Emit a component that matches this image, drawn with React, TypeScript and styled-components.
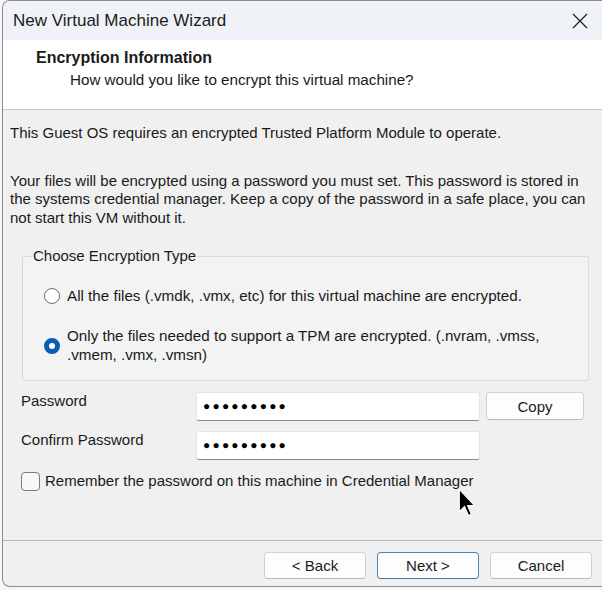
import React, { useState } from "react";
import styled, { createGlobalStyle } from "styled-components";

const GlobalStyle = createGlobalStyle`
  html, body {
    margin: 0;
    padding: 0;
    background: #f6f6f6;
  }
  body {
    font-family: "Liberation Sans", Arial, sans-serif;
    color: #1a1a1a;
  }
`;

const Window = styled.div`
  position: relative;
  margin-left: 2px;
  width: 606px;
  height: 587px;
  display: flex;
  flex-direction: column;
  border: 1px solid #8c8c8c;
  border-right: none;
  border-radius: 8px 0 0 8px;
  overflow: hidden;
  background: #f0f0f0;
  box-sizing: border-box;
`;

const TitleBar = styled.div`
  height: 39px;
  flex: none;
  display: flex;
  align-items: center;
  justify-content: space-between;
  padding-left: 10px;
  background: #eff2f6;
  font-size: 17px;
  color: #1b1b1b;
`;

const CloseButton = styled.button`
  width: 46px;
  height: 39px;
  margin-right: 5px;
  border: none;
  background: transparent;
  display: flex;
  align-items: center;
  justify-content: center;
  padding: 0;
`;

const Header = styled.div`
  flex: none;
  height: 70px;
  box-sizing: border-box;
  background: #ffffff;
  border-bottom: 1px solid #c9c9c9;
  padding: 9px 0 0 33px;
`;

const HeaderTitle = styled.div`
  font-weight: bold;
  font-size: 16px;
  line-height: 18px;
`;

const HeaderSub = styled.div`
  font-size: 15.2px;
  line-height: 18px;
  margin-top: 4px;
  padding-left: 34px;
`;

const Body = styled.div`
  flex: 1;
  padding: 14px 0 0 7px;
  font-size: 15px;
  line-height: 18.5px;
`;

const Para = styled.p<{ $gap?: number }>`
  margin: 0 0 ${(p) => p.$gap ?? 0}px 0;
  width: 595px;
  white-space: nowrap;
`;

const Group = styled.fieldset`
  margin: 20px 0 0 12px;
  width: 567px;
  height: 134px;
  box-sizing: border-box;
  border: 1px solid #dadada;
  border-radius: 2px;
  padding: 21px 0 0 21px;
  background: #f3f3f3;
`;

const Legend = styled.legend`
  padding: 0 2px;
  margin-left: -13px;
  font-size: 15px;
`;

const RadioRow = styled.label`
  display: flex;
  align-items: center;
  gap: 7px;
  margin-bottom: 22px;
  font-size: 15.2px;
  line-height: 18.5px;
`;

const RadioDot = styled.span<{ $on?: boolean }>`
  flex: none;
  width: 16px;
  height: 16px;
  border-radius: 50%;
  box-sizing: border-box;
  border: ${(p) => (p.$on ? "5px solid #0a5fb4" : "1px solid #6e6e6e")};
  background: #fff;
`;

const FieldGrid = styled.div`
  display: grid;
  grid-template-columns: 169px 284px 98px;
  column-gap: 6px;
  row-gap: 10px;
  margin: 11px 0 0 11px;
  align-items: start;
`;

const FieldLabel = styled.div`
  line-height: 18px;
`;

const PwInput = styled.div`
  height: 29px;
  box-sizing: border-box;
  background: #fff;
  border: 1px solid #e4e4e4;
  border-bottom: 1px solid #8a8a8a;
  border-radius: 3px;
  display: flex;
  align-items: center;
  padding-left: 6px;
  font-size: 12px;
  letter-spacing: 2.2px;
  color: #000;
`;

const Button = styled.button<{ $primary?: boolean }>`
  height: 28px;
  box-sizing: border-box;
  background: #fdfdfd;
  border: 1px solid ${(p) => (p.$primary ? "#4f86b8" : "#d2d2d2")};
  border-bottom-color: ${(p) => (p.$primary ? "#3f74a6" : "#b9b9b9")};
  border-radius: 4px;
  font-family: "Liberation Sans", Arial, sans-serif;
  font-size: 15px;
  color: #1a1a1a;
  padding: 0;
`;

const CheckRow = styled.label`
  display: flex;
  align-items: center;
  gap: 5px;
  margin: 12px 0 0 11px;
`;

const CheckBox = styled.span`
  width: 19px;
  height: 19px;
  box-sizing: border-box;
  border: 1px solid #7a7a7a;
  border-radius: 4px;
  background: #f7f7f7;
`;

const Footer = styled.div`
  flex: none;
  height: 34px;
  border-top: 1px solid #b9b9b9;
  display: flex;
  justify-content: flex-end;
  align-items: flex-start;
  gap: 11px;
  padding: 11px 16px 0 0;
`;

const FooterButton = styled(Button)`
  width: 102px;
  height: 27px;
`;

const Cursor = styled.svg`
  position: absolute;
  left: 455px;
  top: 487px;
`;

export default function App() {
  const [mode, setMode] = useState(1);
  return (
    <>
      <GlobalStyle />
      <Window>
        <TitleBar>
          <span>New Virtual Machine Wizard</span>
          <CloseButton aria-label="Close">
            <svg width="16" height="16" viewBox="0 0 16 16">
              <path d="M1 1 L15 15 M15 1 L1 15" stroke="#222" strokeWidth="1.3" />
            </svg>
          </CloseButton>
        </TitleBar>
        <Header>
          <HeaderTitle>Encryption Information</HeaderTitle>
          <HeaderSub>How would you like to encrypt this virtual machine?</HeaderSub>
        </Header>
        <Body>
          <Para $gap={29}>This Guest OS requires an encrypted Trusted Platform Module to operate.</Para>
          <Para>
            Your files will be encrypted using a password you must set. This password is stored in
            <br />
            the systems credential manager. Keep a copy of the password in a safe place, you can
            <br />
            not start this VM without it.
          </Para>
          <Group>
            <Legend>Choose Encryption Type</Legend>
            <RadioRow onClick={() => setMode(0)}>
              <RadioDot $on={mode === 0} />
              <span>All the files (.vmdk, .vmx, etc) for this virtual machine are encrypted.</span>
            </RadioRow>
            <RadioRow onClick={() => setMode(1)}>
              <RadioDot $on={mode === 1} />
              <span>
                Only the files needed to support a TPM are encrypted. (.nvram, .vmss,
                <br />
                .vmem, .vmx, .vmsn)
              </span>
            </RadioRow>
          </Group>
          <FieldGrid>
            <FieldLabel>Password</FieldLabel>
            <PwInput>●●●●●●●●●</PwInput>
            <Button>Copy</Button>
            <FieldLabel>Confirm Password</FieldLabel>
            <PwInput>●●●●●●●●●</PwInput>
            <span />
          </FieldGrid>
          <CheckRow>
            <CheckBox />
            <span>Remember the password on this machine in Credential Manager</span>
          </CheckRow>
        </Body>
        <Footer>
          <FooterButton>&lt; Back</FooterButton>
          <FooterButton $primary>Next &gt;</FooterButton>
          <FooterButton>Cancel</FooterButton>
        </Footer>
        <Cursor width="17" height="29" viewBox="-1 -1 13 22">
          <path d="M0 0 L0 17 L4 13 L7 20 L9.2 19 L6.3 12.3 L11.5 12.3 Z" fill="#000" stroke="#fff" strokeWidth="0.8" />
        </Cursor>
      </Window>
    </>
  );
}
